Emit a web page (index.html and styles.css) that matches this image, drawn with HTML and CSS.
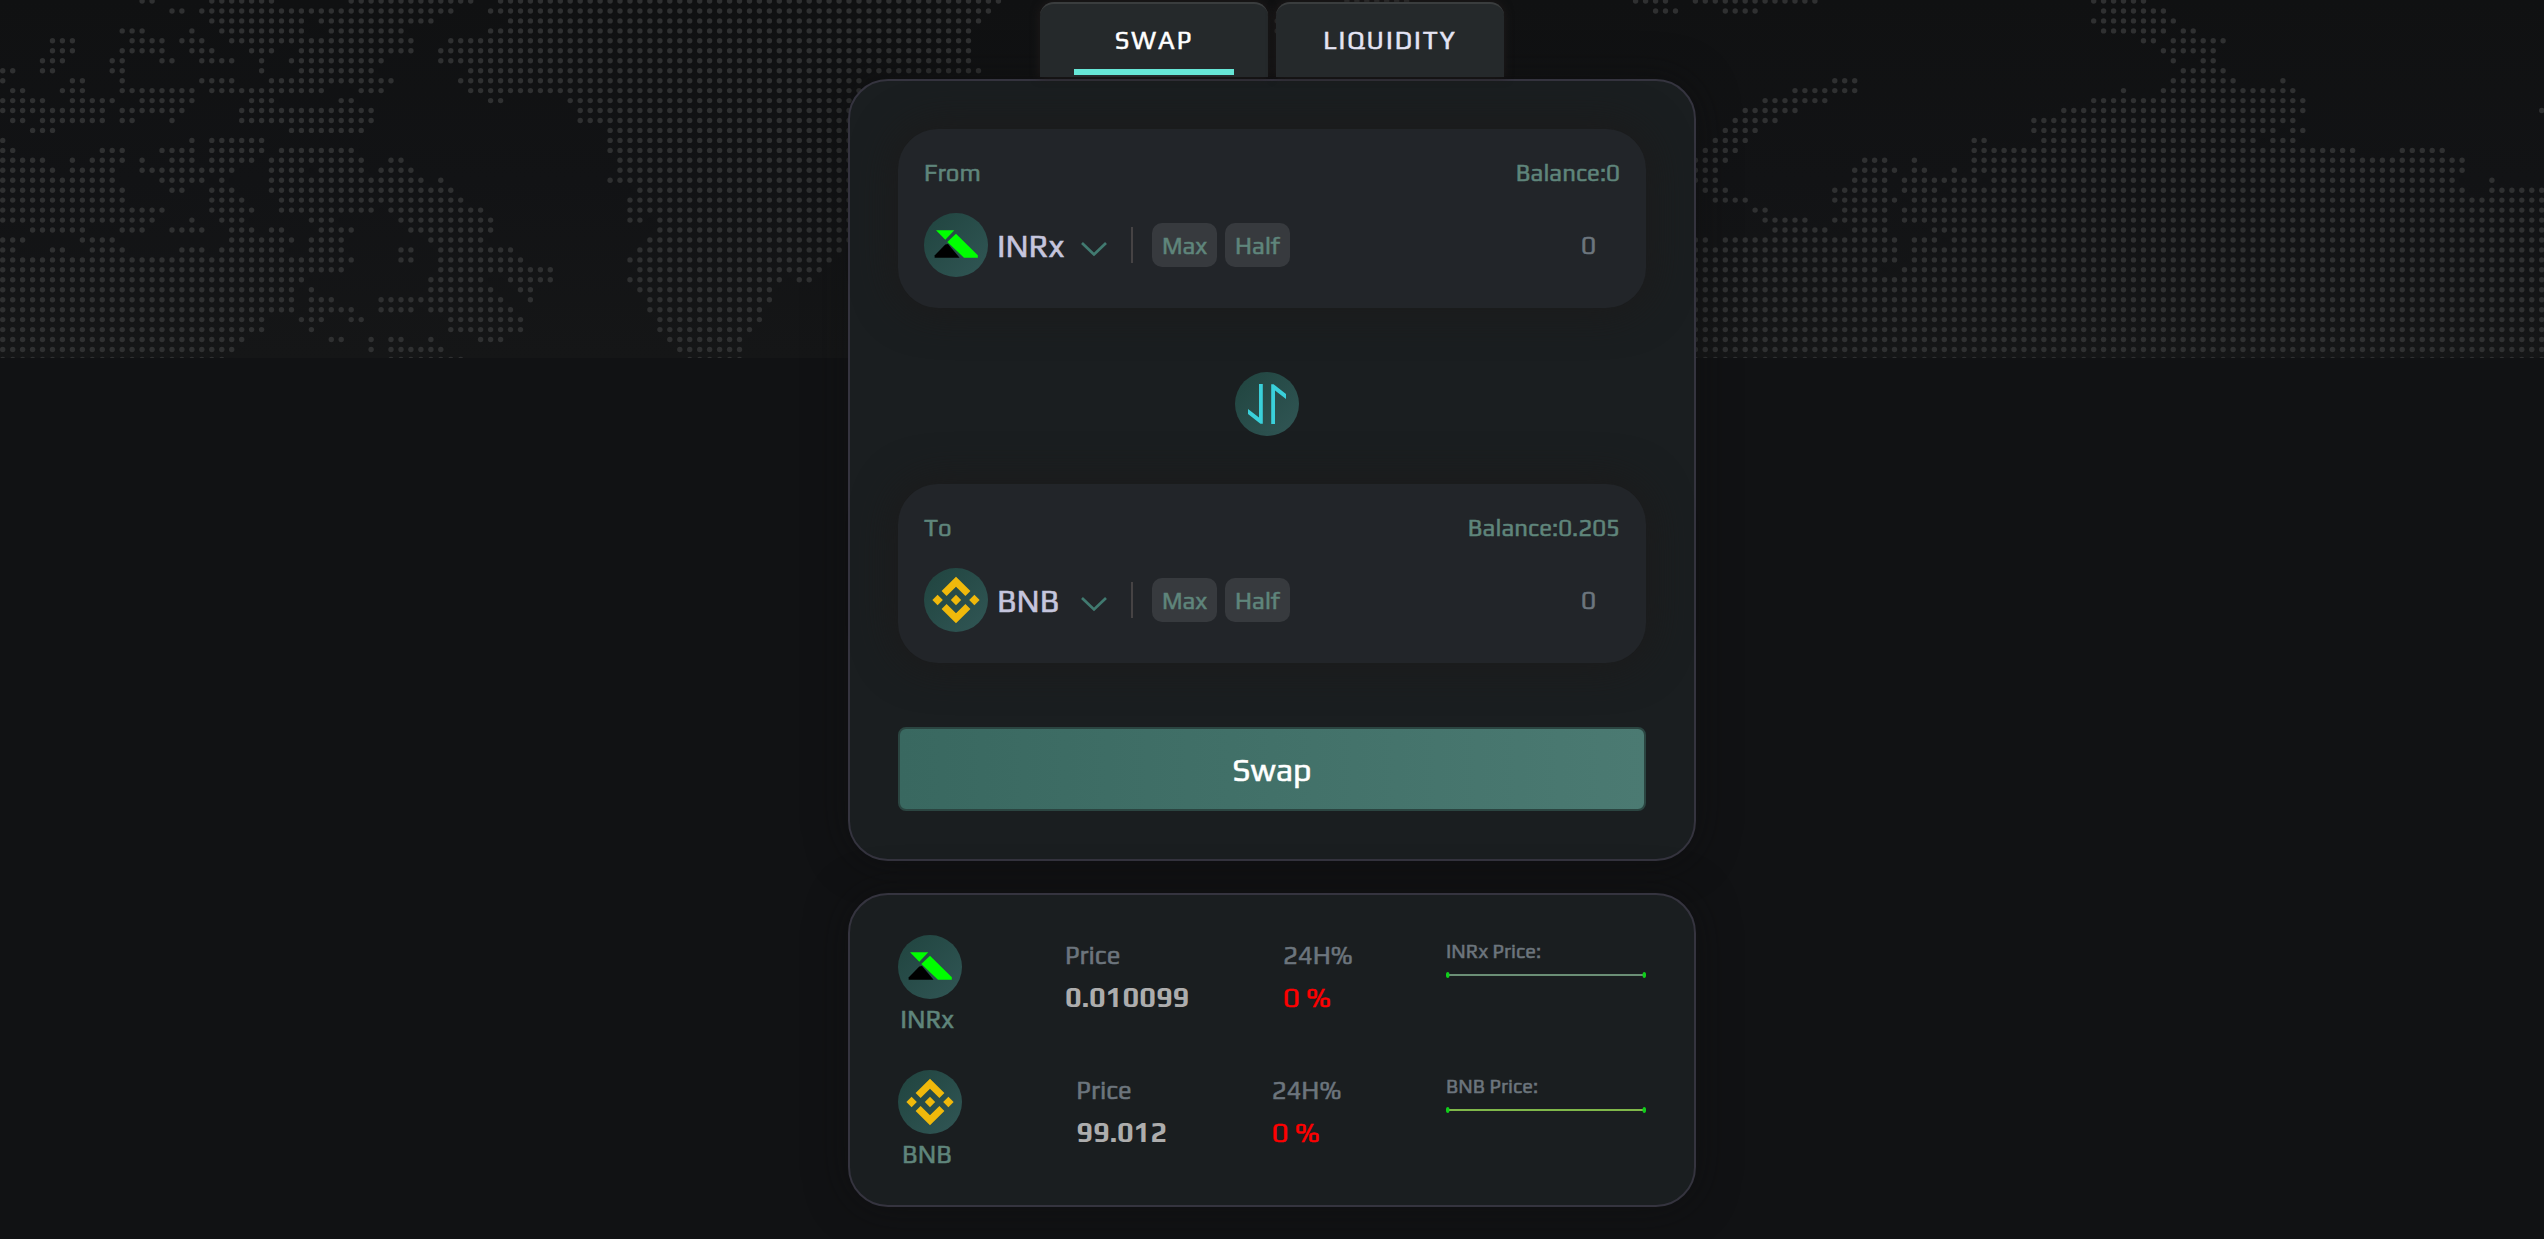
FILE: index.html
```html
<!DOCTYPE html>
<html lang="en">
  <head>
    <meta charset="UTF-8" />
    <meta name="viewport" content="width=device-width, initial-scale=1.0" />
    <title>Swap</title>
    <link rel="stylesheet" href="styles.css">
  </head>
  <body>
    <svg class="symbols" width="0" height="0">
      <symbol id="inrx" viewBox="0 0 64 64">
        <path fill="#0f0" d="M12 17.3h18.3l-9 9.4z" />
        <path fill="#000" d="M21.3 31.5 10.6 42.4v2.3h25L24 31z" />
        <path fill="#0f0" d="m23.3 29 8.7-8.3 21.8 21.6v2.4H40z" />
      </symbol>
      <symbol id="bnb" viewBox="0 0 64 64">
        <g fill="#f0b90b">
          <path d="m32 8.7 14.4 14.4-5 5L32 18.7 22.6 28l-5-5z" />
          <path d="m32 55.3 14.4-14.4-5-5L32 45.3 22.6 36l-5 5z" />
          <path d="m13.6 26.8 5.2 5.2-5.2 5.2L8.4 32z" />
          <path d="m32 26.8 5.2 5.2-5.2 5.2-5.2-5.2z" />
          <path d="m50.4 26.8 5.2 5.2-5.2 5.2-5.2-5.2z" />
        </g>
      </symbol>
      <symbol id="chevron" viewBox="0 0 26 16">
        <path fill="none" stroke="#417a70" stroke-width="2.7" d="m1 2 12 11.5L25 2" />
      </symbol>
      <symbol id="arrows" viewBox="0 0 64 64">
        <path id="arrow" fill="#3ad0da" d="M24 12h3.8v39.7h-2.4L13 42v-5l11 8.6z" />
        <use href="#arrow" transform="rotate(180 32 32)" />
      </symbol>
    </svg>

    <div class="map"><svg id="world" width="2544" height="358"></svg></div>

    <main class="exchange">
      <nav class="tabs">
        <a class="tab active" href="#">SWAP</a>
        <a class="tab" href="#">LIQUIDITY</a>
      </nav>

      <section class="card swap-card">
        <div class="token-box">
          <div class="token-head"><span>From</span><span class="balance">Balance:0</span></div>
          <div class="token-row">
            <svg class="coin"><use href="#inrx" /></svg>
            <span class="token-name">INRx</span>
            <svg class="chevron"><use href="#chevron" /></svg>
            <span class="divider"></span>
            <button class="chip">Max</button>
            <button class="chip">Half</button>
            <span class="amount">0</span>
          </div>
        </div>

        <svg class="coin switch"><use href="#arrows" /></svg>

        <div class="token-box">
          <div class="token-head"><span>To</span><span class="balance">Balance:0.205</span></div>
          <div class="token-row">
            <svg class="coin"><use href="#bnb" /></svg>
            <span class="token-name">BNB</span>
            <svg class="chevron"><use href="#chevron" /></svg>
            <span class="divider"></span>
            <button class="chip">Max</button>
            <button class="chip">Half</button>
            <span class="amount">0</span>
          </div>
        </div>

        <button class="swap-btn">Swap</button>
      </section>

      <section class="card price-card">
        <div class="price-row">
          <div class="price-coin">
            <svg class="coin"><use href="#inrx" /></svg>
            <span>INRx</span>
          </div>
          <div class="stat price-inrx">
            <span>Price</span>
            <b>0.010099</b>
          </div>
          <div class="stat change">
            <span>24H%</span>
            <b class="down">0 %</b>
          </div>
          <div class="chart">
            <span>INRx Price:</span>
            <svg class="spark inrx"><path d="M2 4h196" /><ellipse cx="1.7" cy="4" rx="1.8" ry="3" /><ellipse cx="198.3" cy="4" rx="1.8" ry="3" /></svg>
          </div>
        </div>
        <div class="price-row">
          <div class="price-coin">
            <svg class="coin"><use href="#bnb" /></svg>
            <span>BNB</span>
          </div>
          <div class="stat price-bnb">
            <span>Price</span>
            <b>99.012</b>
          </div>
          <div class="stat change">
            <span>24H%</span>
            <b class="down">0 %</b>
          </div>
          <div class="chart">
            <span>BNB Price:</span>
            <svg class="spark bnb"><path d="M2 4h196" /><ellipse cx="1.7" cy="4" rx="1.8" ry="3" /><ellipse cx="198.3" cy="4" rx="1.8" ry="3" /></svg>
          </div>
        </div>
      </section>
    </main>

    <script src="map.js"></script>
  </body>
</html>
```

FILE: styles.css
```css
*,
*::before,
*::after {
  box-sizing: border-box;
}
:root {
  --clr-page: #111214;
  --clr-card: #1a1e20;
  --clr-border: #35343f;
  --clr-green: #5f857b;
  --clr-muted: #6c757d;
  --ff-base: Play, Roboto, sans-serif;
}
body {
  min-height: 100vh;
  margin: 0;
  font-family: var(--ff-base);
  font-size: 24px;
  color: var(--clr-green);
  background-color: var(--clr-page);
  -webkit-text-stroke: 0.5px;
  overflow: hidden;
}
.symbols {
  position: absolute;
}
.map {
  position: absolute;
  inset: 0 0 auto;
  height: 358px;
  background: linear-gradient(#101112, #121315 50%, #151617);
}
.map svg {
  display: block;
  fill: #2f3031;
}
.exchange {
  position: relative;
  width: 848px;
  margin: 0 auto;
  padding-top: 2px;
}
.tabs {
  position: relative;
  z-index: 1;
  display: flex;
  justify-content: center;
  gap: 8px;
  margin-bottom: 2px;
}
.tab {
  display: flex;
  flex-direction: column;
  align-items: center;
  width: 228px;
  height: 75px;
  padding-top: 20px;
  border-top: 2px solid #3a3d3e;
  border-radius: 14px 14px 0 0;
  background-color: #25292b;
  box-shadow: 0 0 10px #201b1b;
  color: #e4e4f4;
  font-size: 25.6px;
  line-height: 32px;
  letter-spacing: 2px;
  text-decoration: none;
}
.tab.active {
  color: #fff;
}
.tab.active::after {
  content: "";
  width: 160px;
  height: 6px;
  margin-top: 13px;
  background-color: #66e6d6;
}
.card {
  border: 2px solid var(--clr-border);
  border-radius: 40px;
  background-color: var(--clr-card);
  box-shadow: 0 0 40px rgba(14, 14, 14, 0.5);
}
.swap-card {
  height: 782px;
  padding: 48px;
}
.token-box {
  height: 179px;
  padding: 26px;
  border-radius: 40px;
  background-color: #222529;
  box-shadow: 0 0 40px 4px #1c1b1b;
}
.token-head {
  display: flex;
  justify-content: space-between;
  line-height: 36px;
}
.token-row {
  display: flex;
  align-items: center;
  height: 64px;
  margin-top: 22px;
}
.coin {
  flex: none;
  display: block;
  width: 64px;
  height: 64px;
  border-radius: 50%;
  background: linear-gradient(135deg, #20443f, #315655);
}
.token-name {
  width: 93px;
  padding-left: 9px;
  color: #c5c5dd;
  font-size: 32px;
}
.chevron {
  width: 26px;
  height: 16px;
  margin-top: 7px;
}
.divider {
  width: 2px;
  height: 36px;
  margin: 0 19px 0 24px;
  background-color: #464344;
}
.chip {
  width: 65px;
  height: 44px;
  margin-right: 8px;
  padding: 0;
  border: 0;
  border-radius: 10px;
  background-color: #373a3e;
  color: var(--clr-green);
  font: inherit;
}
.amount {
  margin-left: auto;
  padding-right: 24px;
  color: var(--clr-muted);
  font-size: 26px;
}
.switch {
  margin: 64px auto 48px 337px;
}
.swap-btn {
  display: block;
  width: 100%;
  height: 84px;
  margin-top: 64px;
  border: 2px solid #2b4541;
  border-radius: 8px;
  background: linear-gradient(90deg, #396860, #4b7a72);
  color: #fff;
  font-family: inherit;
  font-size: 32px;
}
.price-card {
  height: 314px;
  margin-top: 32px;
  padding: 40px 48px;
}
.price-row {
  display: flex;
  justify-content: space-between;
  height: 135px;
}
.price-coin {
  width: 74px;
}
.price-coin span {
  display: block;
  width: 58px;
  font-size: 25.6px;
  line-height: 40px;
  text-align: center;
}
.stat {
  display: flex;
  flex-direction: column;
  color: var(--clr-muted);
  font-size: 25.6px;
  line-height: 41px;
}
.stat b {
  color: #adadad;
  font-size: 28.8px;
  line-height: 41px;
  -webkit-text-stroke: 0;
}
.stat .down {
  color: #f00;
  font-weight: 400;
  -webkit-text-stroke: 0.5px;
}
.price-inrx {
  width: 125px;
}
.price-bnb {
  width: 91px;
}
.change {
  width: 70px;
}
.chart {
  width: 200px;
  color: var(--clr-muted);
  font-size: 20px;
  line-height: 32px;
}
.chart span,
.spark {
  display: block;
}
.spark {
  width: 200px;
  height: 8px;
  margin-top: 4px;
  fill: #0fce1a;
  stroke-width: 2;
}
.spark.inrx path {
  stroke: #6b8f76;
}
.spark.bnb path {
  stroke: #80b84a;
}
```

FILE: map.js
```js
// dotted world map, one string per row, runs of columns "from-to"
const rows = [
  "14-15 21-27 35-47 50-100 135-141 164-167 170-182 210-215",
  "17-18 20-45 49-99 166-168 173-176 211-217",
  "21-30 32-43 51-98 128 210-218",
  "12-14 19 22-30 33-40 49-97 128 211-217 219-220",
  "5-7 13-16 18-20 23-41 45-97 215-216 218-223",
  "5-7 12-16 19-21 25-27 30-41 44-97 217-222",
  "4-6 11-12 16-17 20-23 26 29-38 44-97 218 221-222",
  "0-1 4-5 11-12 26 30-37 47-98 219-223",
  "0 7-8 12 20-23 27-39 46-86 184-186 218-224 229",
  "1-2 6-8 12-19 21-32 36-38 47-86 180-186 213 217-230",
  "0-4 7-11 14-19 25-27 34-35 49-50 57-86 177-183 210-231",
  "0-10 12-18 24-37 58-86 175-180 207-231 255",
  "1-2 4-10 12-13 17 24-37 58-86 174-178 204-230",
  "3-5 29-36 61-86 173-176 204-228 230-231",
  "0 19 21-26 61-86 172-175 198-199 205-226 228-230",
  "0-1 10-12 16-19 21-26 28-35 61-86 171-174 198-236 241-245",
  "0-4 7 9-12 14 17-19 21-25 27-36 39-40 62-86 170-173 187-189 192 198-247",
  "0-5 7-11 14-23 27-30 32-36 38-41 62-86 170-172 186-190 192-193 196 198-247",
  "0-11 16-20 22 27-42 44 61-86 170-172 186-189 191-198 200-246 250",
  "0-12 17-18 21-23 27-45 64-86 171-173 184-189 191-194 196-247 250-255",
  "0-12 21-24 28-46 63-86 172-175 184-190 192-255",
  "0-16 21-25 28-37 39-48 63-86 176-177 185-189 191-255",
  "0-15 19 22-24 31-33 40-49 63-64 66-86 177-181 184-189 191-255",
  "3-8 12-14 17-20 23-25 27-28 32-35 41-49 66-86 178-183 186-189 194-255",
  "0-2 8-11 23-29 31-34 43-48 65-86 170-171 173-190 192-194 196-255",
  "0-1 5-6 9-12 18-20 22-28 31-34 40-41 44-51 64-84 170-190 192-255",
  "0-35 40-41 44-52 63-83 170-190 192-255",
  "0-34 44-55 64-82 170-188 191-255",
  "0-30 43-48 51-55 63-78 80-81 170-255",
  "0-29 31 43-49 52-53 64-77 170-255",
  "0-29 31-33 38-50 53 65-77 170-255",
  "0-29 31-35 38-41 43-51 65-76 170-255",
  "0-26 30-32 35-36 45-52 66-76 170-255",
  "0-26 31 45-52 66-75 170-255",
  "0-24 33-34 37 39-40 43 48-50 67-74 170-255",
  "0-23 37 39-44 68-74 170-255",
  "0-22 39-46 69-74 170-255",
];
const step = 9.957;
let dots = "";

rows.forEach((row, y) => {
  row.split(" ").forEach((run) => {
    const [from, to = from] = run.split("-").map(Number);
    for (let x = from; x <= to; x++) {
      dots += `<circle cx="${(2.7 + x * step).toFixed(1)}" cy="${(1 + y * step).toFixed(1)}" r="2.7" />`;
    }
  });
});

document.querySelector("#world").innerHTML = dots;
```
